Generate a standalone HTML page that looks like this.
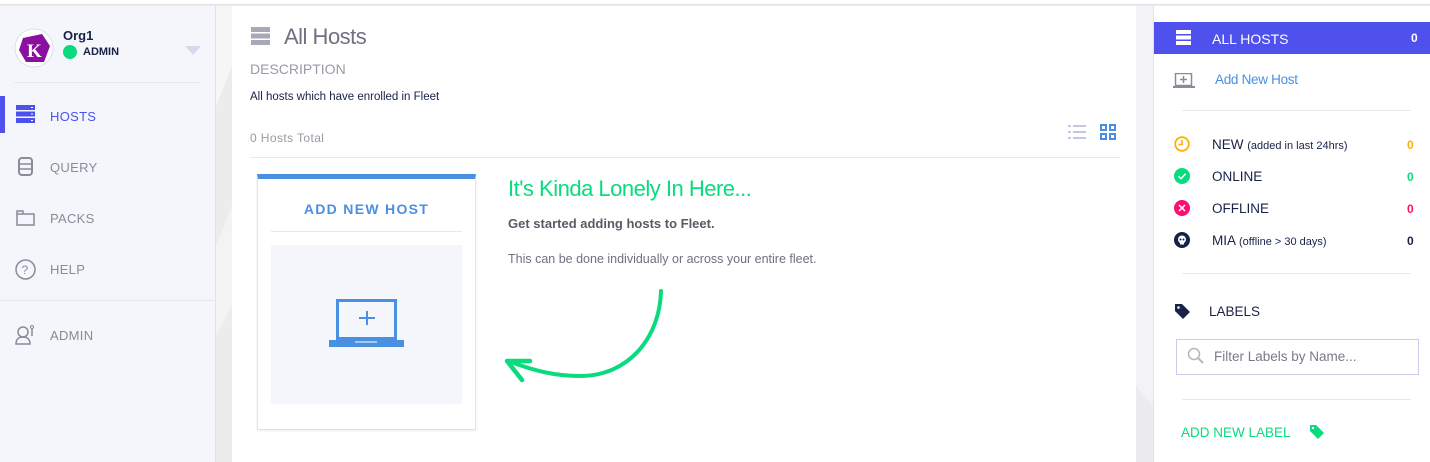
<!DOCTYPE html>
<html><head><meta charset="utf-8"><style>
*{margin:0;padding:0;box-sizing:border-box}
body{width:1430px;height:462px;overflow:hidden;background:#ececee;font-family:"Liberation Sans",sans-serif;position:relative}
.abs{position:absolute}
.top{left:0;top:0;width:1430px;height:5px;background:#fff;border-bottom:1px solid #e2e2e6}
.side{left:0;top:6px;width:216px;height:456px;background:#f4f6fb;border-right:1px solid #e0e2ea}
.nav{position:absolute;left:50px;font-size:13px;color:#8a8a99;letter-spacing:.3px}
.main{left:232px;top:6px;width:904px;height:456px;background:#fff}
.right{left:1153px;top:6px;width:277px;height:456px;background:#fff;border-left:1px solid #e2e2e6}
.hr{position:absolute;height:1px;background:#e6e8ee}
</style></head><body>
<div class="abs top"></div>
<svg class="abs" style="left:216px;top:6px" width="16" height="456"><polygon points="0,0 16,0 16,60 0,100" fill="#f6f6f7"/><polygon points="0,240 16,200 16,300 0,330" fill="#f3f3f4"/></svg>
<svg class="abs" style="left:1136px;top:6px" width="17" height="456"><polygon points="0,0 17,0 17,400 0,380" fill="#f3f3f5"/></svg>
<div class="abs side">
 <svg style="position:absolute;left:14px;top:22px" width="40" height="40"><circle cx="20" cy="20" r="19" fill="#fff" stroke="#dde" /><polygon points="9,10 28,6 36,18 30,34 12,34 5,22" fill="#8b0fa0"/><text x="13" y="29" font-family="Liberation Serif" font-weight="bold" font-size="19" fill="#fff">K</text></svg>
 <div style="position:absolute;left:63px;top:22px;font-size:13px;font-weight:bold;color:#192147">Org1</div>
 <div style="position:absolute;left:63px;top:39px;width:14px;height:14px;border-radius:50%;background:#0adb7e"></div>
 <div style="position:absolute;left:83px;top:40px;font-size:11px;font-weight:bold;color:#192147">ADMIN</div>
 <div style="position:absolute;left:185px;top:40px;width:0;height:0;border-left:8px solid transparent;border-right:8px solid transparent;border-top:9px solid #d5d9f0"></div>
 <div class="hr" style="left:14px;top:76px;width:187px"></div>
 <div style="position:absolute;left:0;top:90px;width:5px;height:37px;background:#4e51eb"></div>
 <svg style="position:absolute;left:16px;top:99px" width="19" height="18"><g fill="#4e51eb"><rect x="0" y="0" width="19" height="5"/><rect x="0" y="6.5" width="19" height="5"/><rect x="0" y="13" width="19" height="5"/></g><g fill="#fff"><rect x="15" y="2" width="2" height="1"/><rect x="15" y="8.5" width="2" height="1"/><rect x="15" y="15" width="2" height="1"/></g></svg>
 <div class="nav" style="top:103px;color:#4e51eb">HOSTS</div>
 <svg style="position:absolute;left:18px;top:151px" width="15" height="19"><rect x="1" y="1" width="13" height="17" rx="3" fill="none" stroke="#8a8a99" stroke-width="2"/><line x1="1" y1="7" x2="14" y2="7" stroke="#8a8a99" stroke-width="1.5"/><line x1="1" y1="12" x2="14" y2="12" stroke="#8a8a99" stroke-width="1.5"/></svg>
 <div class="nav" style="top:154px">QUERY</div>
 <svg style="position:absolute;left:16px;top:204px" width="19" height="16"><path d="M1 1h6v3h11v11H1z M1 4h6" fill="none" stroke="#8a8a99" stroke-width="1.5"/></svg>
 <div class="nav" style="top:205px">PACKS</div>
 <svg style="position:absolute;left:15px;top:253px" width="21" height="21"><circle cx="10.5" cy="10.5" r="9.5" fill="none" stroke="#8a8a99" stroke-width="1.5"/><text x="6.5" y="15" font-size="12" fill="#8a8a99" font-family="Liberation Sans">?</text></svg>
 <div class="nav" style="top:256px">HELP</div>
 <div class="hr" style="left:0;top:294px;width:216px"></div>
 <svg style="position:absolute;left:15px;top:318px" width="22" height="22"><circle cx="8" cy="8" r="5" fill="none" stroke="#8a8a99" stroke-width="1.5"/><path d="M1 20c0-5 3-7 7-7s7 2 7 7z" fill="none" stroke="#8a8a99" stroke-width="1.5"/><circle cx="17" cy="3" r="1.5" fill="none" stroke="#8a8a99"/><line x1="17" y1="5" x2="17" y2="12" stroke="#8a8a99" stroke-width="1.5"/></svg>
 <div class="nav" style="top:322px">ADMIN</div>
</div>
<div class="abs main">
 <svg style="position:absolute;left:19px;top:21px" width="19" height="18"><g fill="#a7a9b6"><rect y="0" width="19" height="5"/><rect y="6.5" width="19" height="5"/><rect y="13" width="19" height="5"/></g></svg>
 <div style="position:absolute;left:52px;top:18px;font-size:22px;color:#6f7080;letter-spacing:-.5px">All Hosts</div>
 <div style="position:absolute;left:18px;top:55px;font-size:14px;color:#9a9aa6">DESCRIPTION</div>
 <div style="position:absolute;left:18px;top:85px;font-size:11.5px;color:#192147">All hosts which have enrolled in Fleet</div>
 <div style="position:absolute;left:18px;top:125px;font-size:12px;color:#9a9aa6;letter-spacing:.4px">0 Hosts Total</div>
 <svg style="position:absolute;left:836px;top:119px" width="18" height="14"><g fill="#c1c5e6"><rect x="0" y="0" width="3" height="2"/><rect x="5" y="0" width="13" height="2"/><rect x="0" y="6" width="3" height="2"/><rect x="5" y="6" width="13" height="2"/><rect x="0" y="12" width="3" height="2"/><rect x="5" y="12" width="13" height="2"/></g></svg>
 <svg style="position:absolute;left:868px;top:118px" width="16" height="16"><g fill="none" stroke="#4a90e2" stroke-width="2"><rect x="1" y="1" width="5" height="5"/><rect x="10" y="1" width="5" height="5"/><rect x="1" y="10" width="5" height="5"/><rect x="10" y="10" width="5" height="5"/></g></svg>
 <div class="hr" style="left:18px;top:151px;width:870px"></div>
 <div style="position:absolute;left:25px;top:168px;width:219px;height:256px;border:1px solid #dde3f2;border-top:5px solid #4a90e2;box-shadow:0 1px 2px rgba(0,0,0,.08)">
  <div style="position:absolute;left:0;width:217px;top:22px;text-align:center;font-size:14px;font-weight:bold;color:#4a90e2;letter-spacing:1.3px">ADD NEW HOST</div>
  <div class="hr" style="left:13px;top:52px;width:191px"></div>
  <div style="position:absolute;left:13px;top:66px;width:191px;height:159px;background:#f4f6fb"></div>
  <svg style="position:absolute;left:71px;top:120px" width="75" height="48"><rect x="8.5" y="1.5" width="58" height="38" fill="none" stroke="#4a90e2" stroke-width="3"/><rect x="0" y="41" width="75" height="7" fill="#4a90e2"/><line x1="26" y1="43" x2="48" y2="43" stroke="#fff" stroke-width="1"/><line x1="38" y1="12" x2="38" y2="26" stroke="#4a90e2" stroke-width="2"/><line x1="30" y1="19" x2="46" y2="19" stroke="#4a90e2" stroke-width="2"/></svg>
 </div>
 <div style="position:absolute;left:276px;top:170px;font-size:22px;color:#0adb7e;letter-spacing:-.5px">It's Kinda Lonely In Here...</div>
 <div style="position:absolute;left:276px;top:210px;font-size:13px;font-weight:bold;color:#5a5a66">Get started adding hosts to Fleet.</div>
 <div style="position:absolute;left:276px;top:246px;font-size:12.5px;color:#6f7080">This can be done individually or across your entire fleet.</div>
 <svg style="position:absolute;left:268px;top:275px" width="170" height="110"><path d="M161 10 C160 55 130 95 80 95 C55 95 35 90 8 80" fill="none" stroke="#0adb7e" stroke-width="4" stroke-linecap="round"/><path d="M22 99 L7 80 L30 80" fill="none" stroke="#0adb7e" stroke-width="4.5" stroke-linecap="round" stroke-linejoin="round"/></svg>
</div>
<div class="abs right">
 <div style="position:absolute;left:0;top:16px;width:277px;height:32px;background:#4e51eb"></div>
 <svg style="position:absolute;left:22px;top:24px" width="15" height="15"><g fill="#fff"><rect y="0" width="15" height="4"/><rect y="5.5" width="15" height="4"/><rect y="11" width="15" height="4"/></g></svg>
 <div style="position:absolute;left:58px;top:25px;font-size:14px;color:#fff">ALL HOSTS</div>
 <div style="position:absolute;left:257px;top:25px;font-size:12px;font-weight:bold;color:#fff">0</div>
 <svg style="position:absolute;left:19px;top:67px" width="22" height="16"><rect x="2.5" y="0.5" width="16" height="12" fill="none" stroke="#8a8a99" stroke-width="1.5"/><rect x="0" y="13" width="22" height="2" fill="#8a8a99"/><line x1="10.5" y1="3" x2="10.5" y2="10" stroke="#8a8a99" stroke-width="1.5"/><line x1="7" y1="6.5" x2="14" y2="6.5" stroke="#8a8a99" stroke-width="1.5"/></svg>
 <div style="position:absolute;left:61px;top:66px;font-size:13.5px;color:#4a90e2;letter-spacing:-.3px">Add New Host</div>
 <div class="hr" style="left:28px;top:104px;width:229px"></div>
 <svg style="position:absolute;left:20px;top:130px" width="16" height="16"><circle cx="8" cy="8" r="6.8" fill="none" stroke="#ffb005" stroke-width="1.8"/><path d="M8 4v4.5H4.5" fill="none" stroke="#ffb005" stroke-width="1.6"/></svg>
 <div style="position:absolute;left:58px;top:131px;font-size:13.5px;color:#192147">NEW <span style="font-size:11px">(added in last 24hrs)</span></div>
 <div style="position:absolute;left:253px;top:132px;font-size:12px;font-weight:bold;color:#ffb005">0</div>
 <svg style="position:absolute;left:20px;top:162px" width="16" height="16"><circle cx="8" cy="8" r="8" fill="#0adb7e"/><path d="M4.5 8.2l2.5 2.5 4.5-5" fill="none" stroke="#fff" stroke-width="1.5"/></svg>
 <div style="position:absolute;left:58px;top:163px;font-size:13.5px;color:#192147">ONLINE</div>
 <div style="position:absolute;left:253px;top:164px;font-size:12px;font-weight:bold;color:#0adb7e">0</div>
 <svg style="position:absolute;left:20px;top:194px" width="16" height="16"><circle cx="8" cy="8" r="8" fill="#ff0f6d"/><path d="M5 5l6 6M11 5l-6 6" stroke="#fff" stroke-width="1.5"/></svg>
 <div style="position:absolute;left:58px;top:195px;font-size:13.5px;color:#192147">OFFLINE</div>
 <div style="position:absolute;left:253px;top:196px;font-size:12px;font-weight:bold;color:#ff0f6d">0</div>
 <svg style="position:absolute;left:20px;top:226px" width="16" height="16"><circle cx="8" cy="8" r="8" fill="#192147"/><circle cx="8" cy="7.5" r="4" fill="#fff"/><rect x="6" y="10" width="4" height="2.5" fill="#fff"/><circle cx="6.5" cy="7.5" r="1" fill="#192147"/><circle cx="9.5" cy="7.5" r="1" fill="#192147"/></svg>
 <div style="position:absolute;left:58px;top:227px;font-size:13.5px;color:#192147">MIA <span style="font-size:11px">(offline &gt; 30 days)</span></div>
 <div style="position:absolute;left:253px;top:228px;font-size:12px;font-weight:bold;color:#192147">0</div>
 <div class="hr" style="left:28px;top:267px;width:229px"></div>
 <svg style="position:absolute;left:20px;top:297px" width="17" height="17"><path d="M1 1h7l8 8-7 7-8-8z" fill="#192147"/><circle cx="4.5" cy="4.5" r="1.3" fill="#fff"/></svg>
 <div style="position:absolute;left:55px;top:298px;font-size:13.5px;color:#192147">LABELS</div>
 <div style="position:absolute;left:22px;top:333px;width:243px;height:36px;border:1px solid #c8cdee"></div>
 <svg style="position:absolute;left:33px;top:341px" width="18" height="18"><circle cx="7" cy="7" r="5.5" fill="none" stroke="#b5b5c0" stroke-width="1.5"/><line x1="11" y1="11" x2="16" y2="16" stroke="#b5b5c0" stroke-width="2"/></svg>
 <div style="position:absolute;left:60px;top:343px;font-size:13.5px;color:#7a7a88">Filter Labels by Name...</div>
 <div class="hr" style="left:28px;top:393px;width:229px"></div>
 <div style="position:absolute;left:27px;top:419px;font-size:13.5px;color:#0adb7e">ADD NEW LABEL</div>
 <svg style="position:absolute;left:155px;top:418px" width="16" height="16"><path d="M1 1h6l8 8-6 6-8-8z" fill="#0adb7e"/><circle cx="4" cy="4" r="1.2" fill="#fff"/></svg>
</div>
</body></html>
